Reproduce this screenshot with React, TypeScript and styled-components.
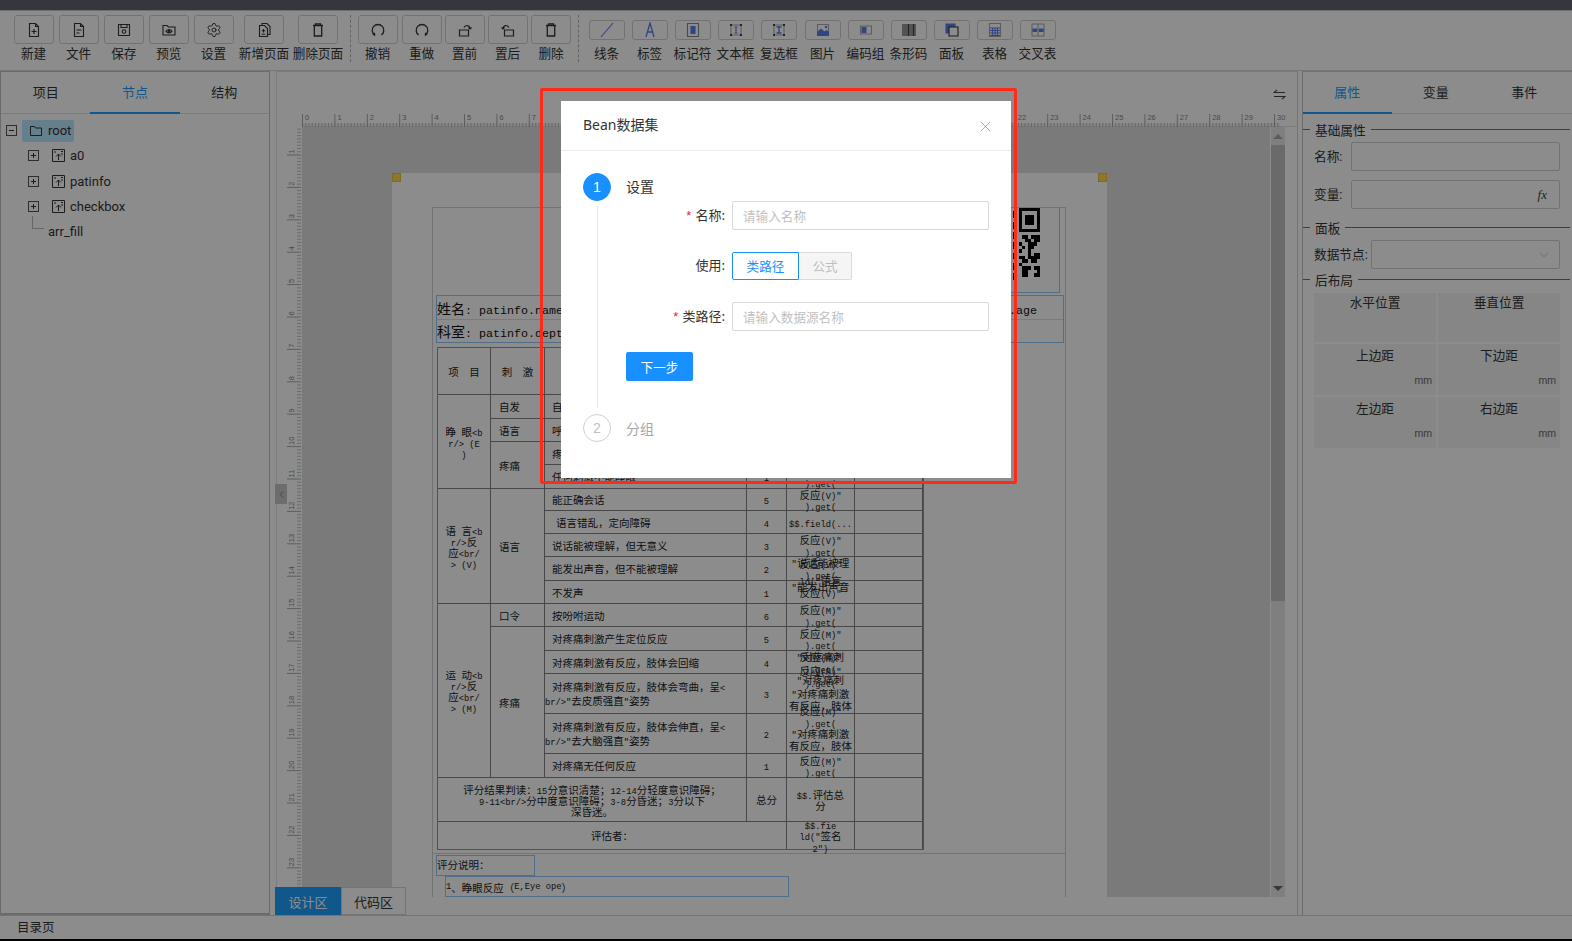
import React from 'react'
import styled, { createGlobalStyle } from 'styled-components'
import { ChevronDown, ChevronLeft, Settings, X } from 'lucide-react'

const GlobalStyle = createGlobalStyle`
  html, body {
    margin: 0;
    padding: 0;
    background: #fff;
  }
  * {
    box-sizing: border-box;
  }
  body {
    font-family: "Roboto", "Noto Sans CJK SC", "Liberation Sans", sans-serif;
    color: #333;
  }
`

const Screen = styled.div`
  position: relative;
  display: flex;
  flex-direction: column;
  width: 1572px;
  height: 941px;
  overflow: hidden;
  background: #fff;
`

const TopBar = styled.div`
  height: 11px;
  background: #62646d;
  border-bottom: 1px solid #c8c8c8;
`

const Toolbar = styled.div`
  display: flex;
  height: 60px;
  padding: 4px 0 0 11px;
  border-bottom: 1px solid #d9d9d9;
`

const Tool = styled.div<{ $w: number }>`
  display: flex;
  flex-direction: column;
  align-items: center;
  flex: none;
  width: ${p => p.$w}px;
`

const ToolSlot = styled.div`
  display: flex;
  align-items: center;
  height: 29px;
`

const ToolBox = styled.div<{ $small?: boolean }>`
  display: flex;
  align-items: center;
  justify-content: center;
  width: ${p => (p.$small ? 36 : 40)}px;
  height: ${p => (p.$small ? 20 : 29)}px;
  border: 1px solid #cfcfcf;
  border-radius: 3px;
  background: #fff;
`

const ToolLabel = styled.div`
  margin-top: 1px;
  font-size: 12.6px;
  line-height: 17px;
  white-space: nowrap;
  color: #333;
`

const ToolSep = styled.div<{ $right: number }>`
  flex: none;
  width: 0;
  height: 47px;
  margin: 0 ${p => p.$right}px 0 6px;
  border-left: 1px dashed #b5b5b5;
`

const Main = styled.div`
  display: flex;
  height: 844px;
`

const LeftPanel = styled.div`
  flex: none;
  width: 270px;
  border: 1px solid #c4c4c4;
  border-bottom-width: 2px;
`

const RightPanel = styled.div`
  flex: none;
  width: 270px;
  margin-left: 4px;
  border-left: 1px solid #c4c4c4;
  border-top: 1px solid #d0d0d0;
`

const Tabs = styled.div<{ $columns?: string }>`
  display: grid;
  grid-template-columns: ${p => p.$columns ?? 'repeat(3, 1fr)'};
  height: 42px;
  border-bottom: 1px solid #e2e2e2;
`

const Tab = styled.div<{ $active?: boolean }>`
  display: flex;
  align-items: center;
  justify-content: center;
  margin-bottom: -1px;
  padding-bottom: 2px;
  font-size: 13px;
  color: ${p => (p.$active ? '#1e9fff' : '#333')};
  border-bottom: 2px solid ${p => (p.$active ? '#1e9fff' : 'transparent')};
`

const Tree = styled.div`
  padding-top: 4px;
`

const TreeRow = styled.div<{ $indent: number }>`
  position: relative;
  display: flex;
  align-items: center;
  height: 25.3px;
  padding-left: ${p => p.$indent}px;
  font-size: 13px;
  color: #333;
`

const Toggle = styled.div`
  position: relative;
  flex: none;
  width: 11px;
  height: 11px;
  border: 1px solid #555;
  background: #fff;
  &::before {
    content: '';
    position: absolute;
    left: 2px;
    right: 2px;
    top: 4px;
    height: 1px;
    background: #333;
  }
`

const PlusToggle = styled(Toggle)`
  &::after {
    content: '';
    position: absolute;
    top: 2px;
    bottom: 2px;
    left: 4px;
    width: 1px;
    background: #333;
  }
`

const RootLabel = styled.div`
  display: flex;
  align-items: center;
  gap: 6px;
  width: 52px;
  height: 22px;
  margin-left: 5px;
  padding-left: 8px;
  border-radius: 2px;
  background: #bae7ff;
`

const NodeIcon = styled.svg`
  flex: none;
  margin: 0 5px 0 13px;
`

const LeafLine = styled.div`
  position: absolute;
  left: 31px;
  top: -3px;
  width: 12px;
  height: 13px;
  border-left: 1px solid #bbb;
  border-bottom: 1px solid #bbb;
`

const CenterPanel = styled.div`
  position: relative;
  flex: none;
  width: 1022px;
  margin-left: 6px;
  border-top: 1px solid #e0e0e0;
  border-left: 1px solid #e4e4e4;
  border-right: 1px solid #d4d4d4;
`

const CenterHead = styled.div`
  display: flex;
  align-items: center;
  justify-content: flex-end;
  height: 40px;
  padding: 4px 11px 0 0;
`

const RulerRow = styled.div`
  height: 15px;
  margin-left: 25px;
  border-bottom: 1px solid #e5e5e5;
`

const CanvasRow = styled.div`
  display: flex;
  height: 770px;
  margin-left: 9px;
`

const Viewport = styled.div`
  flex: none;
  width: 968px;
  height: 770px;
  overflow: hidden;
  background: #dedede;
  padding: 46px 0 0 90px;
`

const Paper = styled.div`
  position: relative;
  width: 715px;
  height: 724px;
  padding: 34px 41px 0 40px;
  background: #fff;
`

const Handle = styled.div<{ $right?: boolean }>`
  position: absolute;
  top: 0;
  ${p => (p.$right ? 'right: 0;' : 'left: 0;')}
  width: 9px;
  height: 9px;
  background: #ffd94d;
  border: 1px solid #f0c030;
`

const Outline = styled.div`
  width: 634px;
  height: 690px;
  padding: 0 1px 0 3px;
  border: 1px solid #cfcfcf;
  border-bottom: none;
  overflow: hidden;
`

const QrSection = styled.div`
  display: flex;
  justify-content: flex-end;
  height: 88px;
  margin-top: -1px;
  padding-right: 4px;
`

const QrBox = styled.div`
  display: flex;
  justify-content: flex-end;
  width: 90px;
  height: 86px;
  padding-right: 19px;
  border: 1px solid #8fc8ff;
`

const InfoBox = styled.div`
  width: 628px;
  height: 48px;
  border: 1px solid #8fc8ff;
`

const InfoRow = styled.div`
  display: flex;
  align-items: center;
  justify-content: space-between;
  height: 23px;
  padding-right: 26px;
  font-size: 14px;
  white-space: nowrap;
  color: #111;
  & + & {
    border-top: 1px solid #dedede;
  }
`

const Latin = styled.span`
  font-family: "Liberation Mono", monospace;
  font-size: 0.8334em;
`

const ReportGrid = styled.div`
  display: grid;
  grid-template-columns: 53px 54px 202px 40px 68px 68px;
  grid-template-rows: 47px 24px 23px 23px 24px 22px 23px 23px 24px 23px 23px 24px 23px 40px 40px 24px 44px 27px;
  width: 487px;
  height: 503px;
  margin: 4px 0 0 1px;
  border: 1px solid #6f9ccc;
  font-family: "Noto Sans CJK SC", sans-serif;
  font-size: 10.5px;
  color: #222;
`

const Cell = styled.div<{ $area: string; $left?: number }>`
  grid-area: ${p => p.$area};
  display: flex;
  flex-direction: column;
  justify-content: center;
  align-items: ${p => (p.$left !== undefined ? 'flex-start' : 'center')};
  padding: 1px 0 0 ${p => p.$left ?? 0}px;
  min-height: 0;
  min-width: 0;
  border-right: 1px solid #838383;
  border-bottom: 1px solid #838383;
  &:nth-last-child(-n + 3) {
    border-bottom: none;
  }
`

const CellLine = styled.div<{ $lh: number; $indent?: number }>`
  flex: none;
  height: ${p => p.$lh}px;
  line-height: ${p => p.$lh}px;
  padding-left: ${p => p.$indent ?? 0}px;
  white-space: pre;
`

const NoteSection = styled.div`
  margin: 3px -1px 0 -3px;
  padding: 1px 0 0 3px;
  border-top: 1px solid #d4d4d4;
  font-family: "Noto Sans CJK SC", sans-serif;
  font-size: 10.5px;
  color: #222;
`

const NoteBox = styled.div<{ $w: number; $left: number }>`
  display: flex;
  align-items: center;
  width: ${p => p.$w}px;
  height: 21px;
  margin-left: ${p => p.$left}px;
  padding-bottom: 2px;
  border: 1px solid #8fc8ff;
  & + & {
    padding: 1px 0 0;
  }
`

const ScrollTrack = styled.div`
  display: flex;
  flex-direction: column;
  align-items: center;
  flex: none;
  width: 14px;
  height: 770px;
  margin-left: 1px;
  background: #e8e8e8;
`

const ScrollThumb = styled.div`
  width: 14px;
  height: 456px;
  margin-top: 6px;
  background: #c2c2c2;
`

const ScrollArrow = styled.div<{ $down?: boolean }>`
  width: 0;
  height: 0;
  margin-top: ${p => (p.$down ? 'auto' : '7px')};
  margin-bottom: ${p => (p.$down ? '6px' : '0')};
  border-left: 5px solid transparent;
  border-right: 5px solid transparent;
  ${p => (p.$down ? 'border-top: 5px solid #666;' : 'border-bottom: 5px solid #aaa;')}
`

const CollapseHandle = styled.div`
  position: absolute;
  left: -2px;
  top: 412px;
  display: flex;
  align-items: center;
  justify-content: center;
  width: 12px;
  height: 20px;
  background: #c6c6c6;
  color: #777;
`

const ViewTabs = styled.div`
  position: absolute;
  left: -2px;
  bottom: 0;
  display: flex;
  height: 28px;
`

const ViewTab = styled.div<{ $active?: boolean }>`
  display: flex;
  align-items: center;
  justify-content: center;
  width: ${p => (p.$active ? 66 : 65)}px;
  font-size: 13px;
  color: ${p => (p.$active ? '#fff' : '#333')};
  background: ${p => (p.$active ? '#1e9fff' : '#fff')};
  border: 1px solid ${p => (p.$active ? '#1e9fff' : '#d4d4d4')};
`

const Legend = styled.div<{ $top: number }>`
  display: flex;
  align-items: center;
  gap: 5px;
  height: 18px;
  margin: ${p => p.$top}px 2px 0 0;
  font-size: 12.7px;
  color: #333;
  &::before {
    content: '';
    width: 7px;
    border-top: 1px solid #3a86b4;
  }
  &::after {
    content: '';
    flex: 1;
    border-top: 1px solid #3a86b4;
  }
`

const PropRow = styled.div<{ $top: number }>`
  display: flex;
  align-items: center;
  height: 29px;
  margin: ${p => p.$top}px 12px 0 11px;
  font-size: 12.7px;
  color: #333;
`

const PropLabel = styled.div<{ $w: number }>`
  flex: none;
  width: ${p => p.$w}px;
  padding-bottom: 2px;
  white-space: nowrap;
`

const PropField = styled.div<{ $pad?: number }>`
  display: flex;
  align-items: center;
  justify-content: flex-end;
  flex: 1;
  height: 29px;
  padding-right: ${p => p.$pad ?? 10}px;
  border: 1px solid #cfcfcf;
  border-radius: 2px;
  background: #fff;
`

const Fx = styled.span`
  font-family: "Liberation Serif", serif;
  font-style: italic;
  font-size: 13px;
  color: #444;
`

const PosGrid = styled.div`
  display: grid;
  grid-template-columns: 122px 122px;
  grid-template-rows: 49px 51px 51px;
  gap: 2px;
  margin: 5px 12px 0 11px;
`

const PosCell = styled.div`
  display: flex;
  flex-direction: column;
  padding: 3px 4px 0;
  background: #f4f4f4;
  font-size: 12.7px;
  text-align: center;
  line-height: 18px;
  &:nth-child(-n + 2) {
    padding-top: 1px;
  }
`

const PosUnit = styled.div`
  margin-top: auto;
  padding-bottom: 8px;
  font-size: 10px;
  line-height: 12px;
  text-align: right;
  color: #666;
`

const StatusBar = styled.div`
  display: flex;
  align-items: center;
  height: 24px;
  padding: 0 0 3px 17px;
  font-size: 12.5px;
  border-top: 1px solid #d4d4d4;
`

const BottomEdge = styled.div`
  height: 2px;
  background: #000;
`

const Overlay = styled.div`
  position: absolute;
  inset: 0;
  display: flex;
  justify-content: center;
  align-items: flex-start;
  padding-top: 101px;
  background: rgba(0, 0, 0, 0.45);
`

const Modal = styled.div`
  position: relative;
  width: 450px;
  height: 377px;
  background: #fff;
  font-family: "Noto Sans CJK SC", "Liberation Sans", sans-serif;
`

const Annotation = styled.div`
  position: absolute;
  top: -13px;
  left: -21px;
  right: -6px;
  bottom: -6px;
  border: 3px solid #ff2a1a;
  border-radius: 2px;
  pointer-events: none;
`

const ModalHead = styled.div`
  display: flex;
  align-items: center;
  justify-content: space-between;
  height: 50px;
  padding: 0 17px 3px 22px;
  border-bottom: 1px solid #ececec;
  font-family: "Noto Sans", "Noto Sans CJK SC", sans-serif;
  font-size: 14px;
  color: #333;
`

const CloseIcon = styled(X)`
  margin-top: 5px;
  color: #8c8c8c;
`

const ModalBody = styled.div`
  padding: 22px 22px 0;
`

const Step = styled.div`
  display: grid;
  grid-template-columns: 28px 1fr;
  column-gap: 15px;
`

const StepAxis = styled.div`
  display: flex;
  flex-direction: column;
  align-items: center;
`

const StepDot = styled.div<{ $active?: boolean }>`
  display: flex;
  align-items: center;
  justify-content: center;
  flex: none;
  width: 28px;
  height: 28px;
  border-radius: 50%;
  font-family: "Liberation Sans", sans-serif;
  font-size: 14px;
  color: ${p => (p.$active ? '#fff' : '#bfbfbf')};
  background: ${p => (p.$active ? '#1890ff' : '#fff')};
  border: 1px solid ${p => (p.$active ? '#1890ff' : '#d0d0d0')};
`

const StepLine = styled.div`
  flex: 1;
  width: 1px;
  margin: 5px 0 6px;
  background: #e8e8e8;
`

const StepContent = styled.div`
  padding-bottom: 33px;
`

const StepTitle = styled.div<{ $muted?: boolean }>`
  height: 28px;
  line-height: ${p => (p.$muted ? 29 : 27)}px;
  font-size: 14px;
  color: ${p => (p.$muted ? '#a6a6a6' : '#333')};
`

const FormRow = styled.div<{ $top?: number }>`
  display: flex;
  align-items: center;
  height: 29px;
  margin-top: ${p => p.$top ?? 0}px;
`

const FormLabel = styled.div`
  flex: none;
  width: 106px;
  padding: 0 7px 3px 0;
  font-size: 13px;
  text-align: right;
  color: #333;
`

const Required = styled.span`
  margin-right: 4px;
  color: #f5222d;
  font-family: "Liberation Sans", sans-serif;
`

const TextInput = styled.input`
  width: 257px;
  height: 29px;
  padding: 0 10px;
  border: 1px solid #d9d9d9;
  border-radius: 2px;
  outline: none;
  font-family: inherit;
  font-size: 12.6px;
  &::placeholder {
    color: #bfbfbf;
  }
`

const Segment = styled.div<{ $active?: boolean; $w: number }>`
  display: flex;
  align-items: center;
  justify-content: center;
  width: ${p => p.$w}px;
  height: 28px;
  font-size: 12.6px;
  color: ${p => (p.$active ? '#1890ff' : '#bfbfbf')};
  background: ${p => (p.$active ? '#fff' : '#f5f5f5')};
  border: 1px solid ${p => (p.$active ? '#1890ff' : '#d9d9d9')};
  border-radius: ${p => (p.$active ? '2px 0 0 2px' : '0 2px 2px 0')};
  ${p => (p.$active ? '' : 'border-left: none;')}
`

const NextButton = styled.div`
  display: flex;
  align-items: center;
  justify-content: center;
  width: 67px;
  height: 29px;
  margin-top: 21px;
  border-radius: 2px;
  background: #1890ff;
  color: #fff;
  font-size: 12.6px;
`

const Ic: React.FC<{ children: React.ReactNode; color?: string }> = ({ children, color = '#333' }) => (
  <svg width="16" height="16" viewBox="0 0 16 16" fill="none" stroke={color} strokeWidth="1.1">
    {children}
  </svg>
)

const BLUE = '#5a7cf0'
const GREY = '#888'

const icons: Record<string, React.ReactNode> = {
  new: <Ic><path d="M3.5 1.5h6l3 3v10h-9zM9.5 1.5v3h3M8 7v5M5.5 9.5h5" /></Ic>,
  file: <Ic><path d="M3.5 1.5h6l3 3v10h-9zM9.5 1.5v3h3M5.5 8h5M5.5 11h3" /></Ic>,
  save: <Ic><path d="M2.5 2.5h11v11h-11zM5 2.5v3h6v-3" /><circle cx="8" cy="9.5" r="1.8" /></Ic>,
  preview: <Ic><path d="M2 3.5h4L7.5 5H14v8H2z" /><path d="M5 9.2c1.8-2.2 4.2-2.2 6 0-1.8 2.2-4.2 2.2-6 0z" /><circle cx="8" cy="9.2" r=".8" /></Ic>,
  gear: <Settings size={16} strokeWidth={1.3} color="#222" />,
  addPage: <Ic><path d="M3.5 3.5h5l3 3v8h-8zM6 3.5v-2h5l3 3v8h-2.5M7.5 7v3.5M5.7 8.7h3.6M5.7 12.2h3.6" /></Ic>,
  trash: <Ic><path d="M3 3.5h10M5.5 3.5V1.8h5v1.7M4.3 3.5V14h7.4V3.5" strokeWidth="1.3" /></Ic>,
  undo: <Ic><path d="M4.6 13a5.8 5.8 0 1 1 6.8 0" strokeWidth="1.3" /><path d="M2.8 11.5l1.8 1.7v-2.5" /></Ic>,
  redo: <Ic><path d="M11.4 13a5.8 5.8 0 1 0-6.8 0" strokeWidth="1.3" /><path d="M13.2 11.5l-1.8 1.7v-2.5" /></Ic>,
  front: <Ic><path d="M2.5 8h9v6h-9zM7 5.5c2-3 5.5-2.5 6 1M11.5 5.5L13 7l1.5-1.5" strokeWidth="1.2" /></Ic>,
  back: <Ic><path d="M4.5 8h9v6h-9zM9 5.5c-2-3-5.5-2.5-6 1M4.5 5.5L3 7 1.5 5.5" strokeWidth="1.2" /></Ic>,
  line: <Ic color={BLUE}><path d="M2 15L14 1" /></Ic>,
  label: <Ic color={BLUE}><path d="M4 15L8 1l4 14M5.5 10h5" strokeWidth="1.3" /></Ic>,
  marker: (
    <Ic>
      <path d="M2.5 1.5h11v13h-11z" stroke={GREY} />
      <path d="M6 4.5h4v7H6z" fill={BLUE} stroke={BLUE} />
    </Ic>
  ),
  textbox: (
    <Ic>
      <path d="M3 3h10M3 13h10M3 3v10M13 3v10" stroke="#aaa" />
      <path d="M2 2h2v2H2zM12 2h2v2h-2zM2 12h2v2H2zM12 12h2v2h-2z" fill="#444" stroke="none" />
      <path d="M6.5 5h3M8 5v6M6.5 11h3" stroke={BLUE} />
    </Ic>
  ),
  checkbox: (
    <Ic>
      <path d="M3 3h10M3 13h10M3 3v10M13 3v10" stroke="#aaa" />
      <path d="M2 2h2v2H2zM12 2h2v2h-2zM2 12h2v2H2zM12 12h2v2h-2z" fill="#444" stroke="none" />
      <path d="M5.5 5h5M8 5v6M5.5 11h5" stroke={BLUE} strokeWidth="1.4" />
    </Ic>
  ),
  image: (
    <Ic>
      <path d="M2.5 2.5h11v11h-11z" stroke="#aaa" />
      <path d="M2 14v-4l4-3.5 3.5 3 2-1.5L14 10v4z" fill={BLUE} stroke="none" />
      <circle cx="11" cy="5" r="1.2" fill={BLUE} stroke="none" />
    </Ic>
  ),
  codegroup: (
    <Ic>
      <path d="M2.5 4h11v8h-11z" stroke="#aaa" />
      <path d="M3.5 5h5v6h-5z" fill={BLUE} stroke="none" />
    </Ic>
  ),
  barcode: (
    <Ic color="#444">
      <path d="M2 2v12M4 2v12M6 2v12M7.5 2v12M9 2v12M11 2v12M12.5 2v12M14 2v12" />
    </Ic>
  ),
  panel: (
    <Ic>
      <path d="M2 2h9v9H2z" fill={BLUE} stroke={BLUE} />
      <path d="M5 5h9v9H5z" fill="#fff" stroke="#333" />
    </Ic>
  ),
  table: (
    <Ic>
      <path d="M2.5 1.5h11v13h-11z" stroke="#aaa" />
      <path d="M3 6h10M3 8.5h10M3 11h10M3 13.5h10M5.5 6v8M8 6v8M10.5 6v8" stroke={BLUE} />
    </Ic>
  ),
  cross: (
    <Ic>
      <path d="M2 2h12v12H2zM8 2v12M2 8h12" stroke="#aaa" />
      <path d="M2.5 6.5H7V10H2.5zM9 6.5h4.5V10H9z" fill={BLUE} stroke="none" />
    </Ic>
  ),
}

const fileTools = [
  { label: '新建', icon: 'new', w: 45 },
  { label: '文件', icon: 'file', w: 45 },
  { label: '保存', icon: 'save', w: 45.5 },
  { label: '预览', icon: 'preview', w: 44.5 },
  { label: '设置', icon: 'gear', w: 45 },
  { label: '新增页面', icon: 'addPage', w: 56 },
  { label: '删除页面', icon: 'trash', w: 52 },
]

const editTools = [
  { label: '撤销', icon: 'undo', w: 43 },
  { label: '重做', icon: 'redo', w: 45 },
  { label: '置前', icon: 'front', w: 41 },
  { label: '置后', icon: 'back', w: 45 },
  { label: '删除', icon: 'trash', w: 42 },
]

const widgetTools = [
  { label: '线条', icon: 'line', w: 43 },
  { label: '标签', icon: 'label', w: 43 },
  { label: '标记符', icon: 'marker', w: 43 },
  { label: '文本框', icon: 'textbox', w: 43 },
  { label: '复选框', icon: 'checkbox', w: 44 },
  { label: '图片', icon: 'image', w: 43 },
  { label: '编码组', icon: 'codegroup', w: 43 },
  { label: '条形码', icon: 'barcode', w: 43 },
  { label: '面板', icon: 'panel', w: 43 },
  { label: '表格', icon: 'table', w: 43 },
  { label: '交叉表', icon: 'cross', w: 43 },
]

const renderTools = (tools: typeof fileTools, small?: boolean) =>
  tools.map(t => (
    <Tool key={t.label} $w={t.w}>
      <ToolSlot>
        <ToolBox $small={small}>{icons[t.icon]}</ToolBox>
      </ToolSlot>
      <ToolLabel>{t.label}</ToolLabel>
    </Tool>
  ))

const mixed = (text: string) =>
  text.split(/([\x20-\x7e]+)/).map((part, i) => (i % 2 ? <Latin key={i}>{part}</Latin> : part))

const HRuler = () => (
  <svg width="990" height="14">
    {Array.from({ length: 302 }, (_, i) => {
      const x = i * 3.24 + 0.5
      return <line key={i} x1={x} x2={x} y1={i % 10 === 0 ? 1 : 10} y2="14" stroke={i % 10 === 0 ? '#aaa' : '#c4c4c4'} />
    })}
    <rect x="0" y="10" width="978" height="4" fill="#000" opacity="0.04" />
    {Array.from({ length: 31 }, (_, i) => (
      <text key={i} x={i * 32.4 + 3} y="7" fontSize="7.5" fill="#888" fontFamily="Liberation Sans">{i}</text>
    ))}
  </svg>
)

const VRuler = () => (
  <svg width="16" height="770">
    {Array.from({ length: 240 }, (_, i) => {
      const y = i * 3.24 - 4.4
      return <line key={i} x1={i % 10 === 0 ? 1 : 11} x2="15" y1={y} y2={y} stroke={i % 10 === 0 ? '#aaa' : '#c4c4c4'} />
    })}
    {Array.from({ length: 23 }, (_, i) => {
      const y = (i + 1) * 32.4 - 6
      return (
        <text key={i} x="0" y="0" transform={`translate(8 ${y}) rotate(-90)`} fontSize="7.5" fill="#888" fontFamily="Liberation Sans">{i + 1}</text>
      )
    })}
  </svg>
)

// right hand modules only, the rest sits behind the dialog
const qrRows = [
  '............1111111',
  '..........1.1000001',
  '..........1.1011101',
  '..........0.1011101',
  '..........1.1011101',
  '..........1.1000001',
  '..........0.1111111',
  '..........1.0000000',
  '..........1.0110111',
  '..........0.0011011',
  '..........1.1001110',
  '..........1.0101100',
  '..........0.1001000',
  '..........1.0001011',
  '..........1.1101111',
  '..........0.0110110',
  '..........1.1000000',
  '..........1.0111011',
  '..........0.0110001',
  '..........1.0110011',
  '..........1.0000000',
]

const QrCode = () => (
  <svg width="57" height="72" viewBox="0 0 19 21" preserveAspectRatio="none" shapeRendering="crispEdges">
    {qrRows.map((row, y) =>
      row.split('').map((v, x) => (v === '1' ? <rect key={`${x}-${y}`} x={x} y={y} width="1" height="1" fill="#000" /> : null)),
    )}
  </svg>
)

const score = (axis: string, ...rest: string[]) => ['', '', `反应(${axis})"`, ').get(', ...rest]

type CellDef = { area: string; lines: string[]; left?: number; lh?: number; indent?: number }

const col = (n: number, row: number, rowEnd = row + 1) => `${row} / ${n} / ${rowEnd} / ${n + 1}`

const cells: CellDef[] = [
  { area: col(1, 1), lines: ['项  目'] },
  { area: col(2, 1), lines: ['刺  激'] },
  { area: col(3, 1), lines: ['患者反应'] },
  { area: col(4, 1), lines: ['评分'] },
  { area: col(5, 1), lines: ['分值'] },
  { area: col(6, 1), lines: [''] },

  { area: col(1, 2, 6), lines: ['睁 眼<b', 'r/> (E', ')'], lh: 11 },
  { area: col(2, 2), lines: ['自发'], left: 8 },
  { area: col(2, 3), lines: ['语言'], left: 8 },
  { area: col(2, 4, 6), lines: ['疼痛'], left: 8 },
  { area: col(3, 2), lines: ['自动睁眼'], left: 7 },
  { area: col(3, 3), lines: ['呼唤睁眼'], left: 7 },
  { area: col(3, 4), lines: ['疼痛刺激睁眼'], left: 7 },
  { area: col(3, 5), lines: ['任何刺激不能睁眼'], left: 7 },
  { area: col(4, 2), lines: ['4'] },
  { area: col(4, 3), lines: ['3'] },
  { area: col(4, 4), lines: ['2'] },
  { area: col(4, 5), lines: ['1'] },
  { area: col(5, 5), lines: score('E', '', '') },
  { area: col(6, 2), lines: [''] },
  { area: col(6, 3), lines: [''] },
  { area: col(6, 4), lines: [''] },
  { area: col(6, 5), lines: [''] },

  { area: col(1, 6, 11), lines: ['语 言<b', 'r/>反', '应<br/', '> (V)'], lh: 11 },
  { area: col(2, 6, 11), lines: ['语言'], left: 8 },
  { area: col(3, 6), lines: ['能正确会话'], left: 7 },
  { area: col(3, 7), lines: ['语言错乱，定向障碍'], left: 11 },
  { area: col(3, 8), lines: ['说话能被理解，但无意义'], left: 7 },
  { area: col(3, 9), lines: ['能发出声音，但不能被理解'], left: 7 },
  { area: col(3, 10), lines: ['不发声'], left: 7 },
  { area: col(4, 6), lines: ['5'] },
  { area: col(4, 7), lines: ['4'] },
  { area: col(4, 8), lines: ['3'] },
  { area: col(4, 9), lines: ['2'] },
  { area: col(4, 10), lines: ['1'] },
  { area: col(5, 6), lines: score('V', '', '') },
  { area: col(5, 7), lines: ['$$.field(...'] },
  { area: col(5, 8), lines: score('V', '"说话能被理', '') },
  { area: col(5, 9), lines: score('V', '"能发出声音', '') },
  { area: col(5, 10), lines: ['', 'ld("语言', '反应(V)"', '', ''] },
  { area: col(6, 6), lines: [''] },
  { area: col(6, 7), lines: [''] },
  { area: col(6, 8), lines: [''] },
  { area: col(6, 9), lines: [''] },
  { area: col(6, 10), lines: [''] },

  { area: col(1, 11, 17), lines: ['运 动<b', 'r/>反', '应<br/', '> (M)'], lh: 11 },
  { area: col(2, 11), lines: ['口令'], left: 8 },
  { area: col(2, 12, 17), lines: ['疼痛'], left: 8 },
  { area: col(3, 11), lines: ['按吩咐运动'], left: 7 },
  { area: col(3, 12), lines: ['对疼痛刺激产生定位反应'], left: 7 },
  { area: col(3, 13), lines: ['对疼痛刺激有反应，肢体会回缩'], left: 7 },
  { area: col(3, 14), lines: ['对疼痛刺激有反应，肢体会弯曲，呈<', 'br/>"去皮质强直"姿势'], left: 0, lh: 14, indent: 7 },
  { area: col(3, 15), lines: ['对疼痛刺激有反应，肢体会伸直，呈<', 'br/>"去大脑强直"姿势'], left: 0, lh: 14, indent: 7 },
  { area: col(3, 16), lines: ['对疼痛无任何反应'], left: 7 },
  { area: col(4, 11), lines: ['6'] },
  { area: col(4, 12), lines: ['5'] },
  { area: col(4, 13), lines: ['4'] },
  { area: col(4, 14), lines: ['3'] },
  { area: col(4, 15), lines: ['2'] },
  { area: col(4, 16), lines: ['1'] },
  { area: col(5, 11), lines: score('M', '', '') },
  { area: col(5, 12), lines: score('M', '"对疼痛刺', '') },
  { area: col(5, 13), lines: score('M', '"对疼痛刺', '') },
  { area: col(5, 14), lines: score('M', '"对疼痛刺激', '有反应，肢体', '', '', '') },
  { area: col(5, 15), lines: score('M', '"对疼痛刺激', '有反应，肢体', '', '', '') },
  { area: col(5, 16), lines: score('M', '', '') },
  { area: col(6, 11), lines: [''] },
  { area: col(6, 12), lines: [''] },
  { area: col(6, 13), lines: [''] },
  { area: col(6, 14), lines: [''] },
  { area: col(6, 15), lines: [''] },
  { area: col(6, 16), lines: [''] },

  { area: '17 / 1 / 18 / 4', lines: ['评分结果判读：15分意识清楚；12-14分轻度意识障碍；', '9-11<br/>分中度意识障碍；3-8分昏迷；3分以下', '深昏迷。'], lh: 11 },
  { area: col(4, 17), lines: ['总分'] },
  { area: col(5, 17), lines: ['$$.评估总', '分'] },
  { area: col(6, 17), lines: [''] },
  { area: '18 / 1 / 19 / 5', lines: ['评估者：'] },
  { area: col(5, 18), lines: ['$$.fie', 'ld("签名', '2")'] },
  { area: col(6, 18), lines: [''] },
]

const posCells = [
  { label: '水平位置' },
  { label: '垂直位置' },
  { label: '上边距', unit: 'mm' },
  { label: '下边距', unit: 'mm' },
  { label: '左边距', unit: 'mm' },
  { label: '右边距', unit: 'mm' },
]

const NodeGlyph = () => (
  <NodeIcon width="13" height="13" viewBox="0 0 13 13" fill="none" stroke="#333">
    <path d="M.5.5h12v12H.5z" />
    <path d="M6.5 11V5M4 7.5L6.5 5 9 7.5M9 2.5h2M9 5h2M2 3h2" />
  </NodeIcon>
)

const App: React.FC = () => (
  <Screen>
    <GlobalStyle />
    <TopBar />
    <Toolbar>
      {renderTools(fileTools)}
      <ToolSep $right={5} />
      {renderTools(editTools)}
      <ToolSep $right={6} />
      {renderTools(widgetTools, true)}
    </Toolbar>
    <Main>
      <LeftPanel>
        <Tabs>
          <Tab>项目</Tab>
          <Tab $active>节点</Tab>
          <Tab>结构</Tab>
        </Tabs>
        <Tree>
          <TreeRow $indent={5}>
            <Toggle />
            <RootLabel>
              <svg width="12" height="11" viewBox="0 0 12 11" fill="none" stroke="#333">
                <path d="M.5 1.5h4l1 1.5h6v7.5H.5z" />
              </svg>
              root
            </RootLabel>
          </TreeRow>
          <TreeRow $indent={27}>
            <PlusToggle />
            <NodeGlyph />
            a0
          </TreeRow>
          <TreeRow $indent={27}>
            <PlusToggle />
            <NodeGlyph />
            patinfo
          </TreeRow>
          <TreeRow $indent={27}>
            <PlusToggle />
            <NodeGlyph />
            checkbox
          </TreeRow>
          <TreeRow $indent={47}>
            <LeafLine />
            arr_fill
          </TreeRow>
        </Tree>
      </LeftPanel>
      <CenterPanel>
        <CenterHead>
          <svg width="13" height="11" viewBox="0 0 13 11" fill="none" stroke="#444" strokeWidth="1.1">
            <path d="M12 3.5H1L4 .8M1 7.5h11L9 10.2" />
          </svg>
        </CenterHead>
        <RulerRow>
          <HRuler />
        </RulerRow>
        <CanvasRow>
          <VRuler />
          <Viewport>
            <Paper>
              <Handle />
              <Handle $right />
              <Outline>
                <QrSection>
                  <QrBox>
                    <QrCode />
                  </QrBox>
                </QrSection>
                <InfoBox>
                  <InfoRow>
                    <span>{mixed('姓名: patinfo.name')}</span>
                    <span>{mixed('年龄: patinfo.age')}</span>
                  </InfoRow>
                  <InfoRow>
                    <span>{mixed('科室: patinfo.dept')}</span>
                  </InfoRow>
                </InfoBox>
                <ReportGrid>
                  {cells.map(c => (
                    <Cell key={c.area} $area={c.area} $left={c.left}>
                      {c.lines.map((line, i) => (
                        <CellLine key={i} $lh={c.lh ?? 11.5} $indent={i === 0 ? c.indent : 0}>
                          {mixed(line)}
                        </CellLine>
                      ))}
                    </Cell>
                  ))}
                </ReportGrid>
                <NoteSection>
                  <NoteBox $w={99} $left={0}>评分说明：</NoteBox>
                  <NoteBox $w={344} $left={9}>{mixed('1、睁眼反应（E,Eye ope）')}</NoteBox>
                </NoteSection>
              </Outline>
            </Paper>
          </Viewport>
          <ScrollTrack>
            <ScrollArrow />
            <ScrollThumb />
            <ScrollArrow $down />
          </ScrollTrack>
        </CanvasRow>
        <CollapseHandle>
          <ChevronLeft size={11} />
        </CollapseHandle>
        <ViewTabs>
          <ViewTab $active>设计区</ViewTab>
          <ViewTab>代码区</ViewTab>
        </ViewTabs>
      </CenterPanel>
      <RightPanel>
        <Tabs $columns="88.5px 88.5px 88.5px">
          <Tab $active>属性</Tab>
          <Tab>变量</Tab>
          <Tab>事件</Tab>
        </Tabs>
        <Legend $top={6}>基础属性</Legend>
        <PropRow $top={4}>
          <PropLabel $w={37}>名称:</PropLabel>
          <PropField />
        </PropRow>
        <PropRow $top={9}>
          <PropLabel $w={37}>变量:</PropLabel>
          <PropField $pad={12}>
            <Fx>fx</Fx>
          </PropField>
        </PropRow>
        <Legend $top={9}>面板</Legend>
        <PropRow $top={4}>
          <PropLabel $w={57}>数据节点:</PropLabel>
          <PropField $pad={8}>
            <ChevronDown size={14} color="#aaa" strokeWidth={1.2} />
          </PropField>
        </PropRow>
        <Legend $top={1}>后布局</Legend>
        <PosGrid>
          {posCells.map(c => (
            <PosCell key={c.label}>
              {c.label}
              {c.unit && <PosUnit>{c.unit}</PosUnit>}
            </PosCell>
          ))}
        </PosGrid>
      </RightPanel>
    </Main>
    <StatusBar>目录页</StatusBar>
    <BottomEdge />
    <Overlay>
      <Modal>
        <Annotation />
        <ModalHead>
          Bean数据集
          <CloseIcon size={17} strokeWidth={1.1} />
        </ModalHead>
        <ModalBody>
          <Step>
            <StepAxis>
              <StepDot $active>1</StepDot>
              <StepLine />
            </StepAxis>
            <StepContent>
              <StepTitle>设置</StepTitle>
              <FormRow>
                <FormLabel><Required>*</Required>名称:</FormLabel>
                <TextInput placeholder="请输入名称" readOnly />
              </FormRow>
              <FormRow $top={21}>
                <FormLabel>使用:</FormLabel>
                <Segment $active $w={67}>类路径</Segment>
                <Segment $w={53}>公式</Segment>
              </FormRow>
              <FormRow $top={22}>
                <FormLabel><Required>*</Required>类路径:</FormLabel>
                <TextInput placeholder="请输入数据源名称" readOnly />
              </FormRow>
              <NextButton>下一步</NextButton>
            </StepContent>
          </Step>
          <Step>
            <StepAxis>
              <StepDot>2</StepDot>
            </StepAxis>
            <StepTitle $muted>分组</StepTitle>
          </Step>
        </ModalBody>
      </Modal>
    </Overlay>
  </Screen>
)

export default App
